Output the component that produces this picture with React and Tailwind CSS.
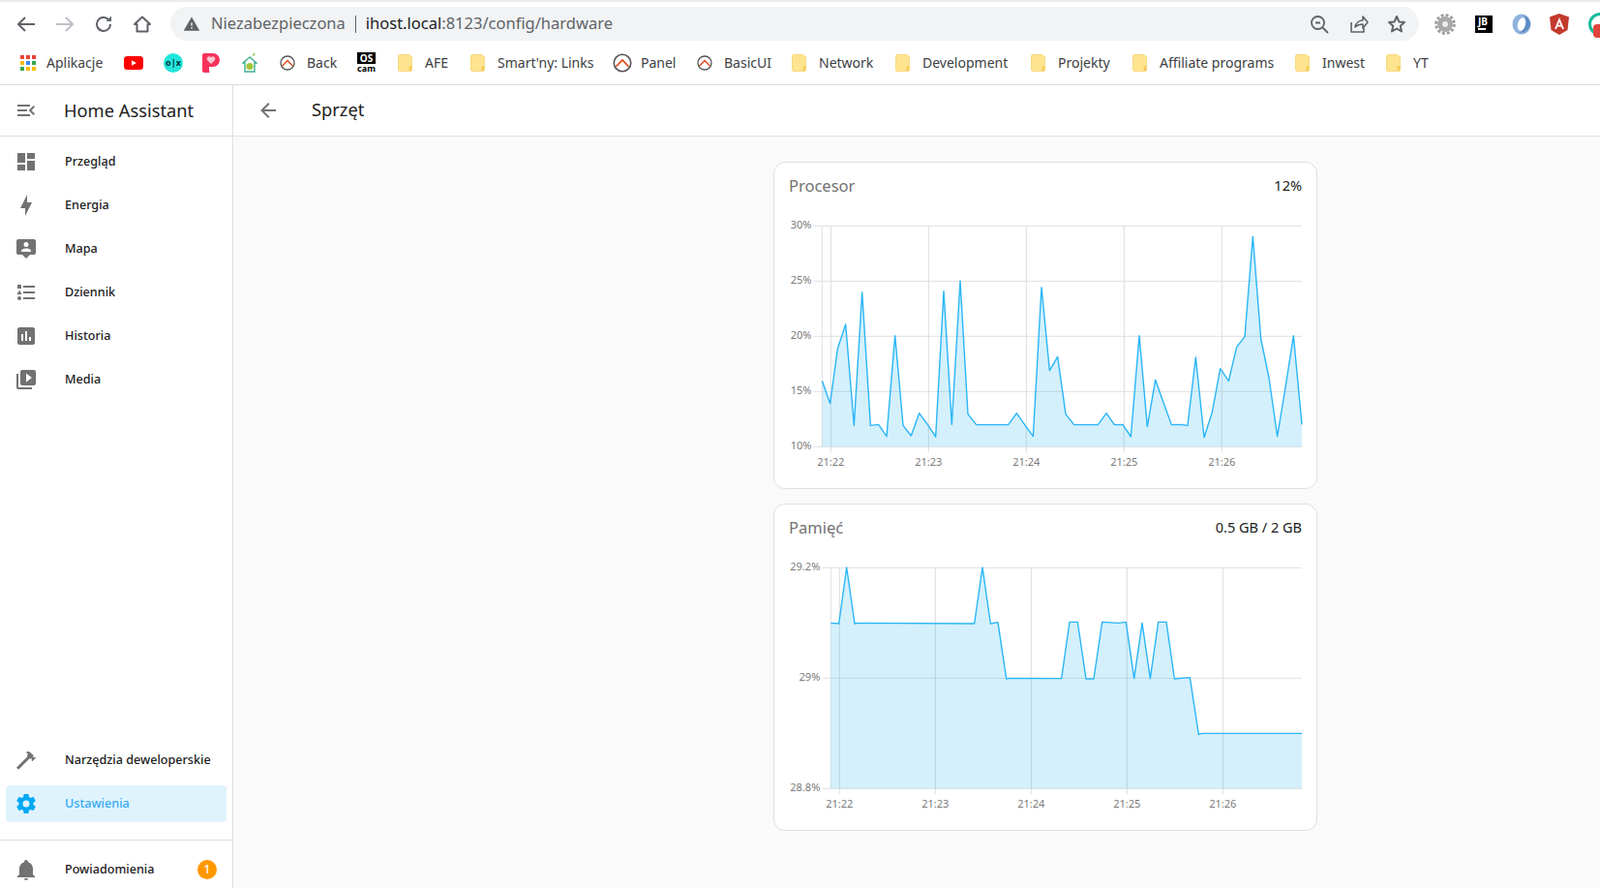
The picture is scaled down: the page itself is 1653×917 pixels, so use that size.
import React from 'react';

// material design icon paths
const icons = {
  menu: 'M21,15.61L19.59,17L14.58,12L19.59,7L21,8.39L17.44,12L21,15.61M3,6H16V8H3V6M3,13V11H13V13H3M3,18V16H16V18H3Z',
  back: 'M20,11V13H8L13.5,18.5L12.08,19.92L4.16,12L12.08,4.08L13.5,5.5L8,11H20Z',
  dashboard: 'M13,3V9H21V3M13,21H21V11H13M3,21H11V15H3M3,13H11V3H3V13Z',
  bolt: 'M11 15H6L13 1V9H18L11 23V15Z',
  map: 'M20 2H4A2 2 0 0 0 2 4V16A2 2 0 0 0 4 18H8L12 22L16 18H20A2 2 0 0 0 22 16V4A2 2 0 0 0 20 2M12 5A2.5 2.5 0 0 1 14.5 7.5A2.5 2.5 0 0 1 12 10A2.5 2.5 0 0 1 9.5 7.5A2.5 2.5 0 0 1 12 5M17 15H7V14C7 12.3 10.3 11.4 12 11.4C13.7 11.4 17 12.3 17 14V15Z',
  list: 'M5,9.5L7.5,14H2.5L5,9.5M3,4H7V8H3V4M5,20A2,2 0 0,0 7,18A2,2 0 0,0 5,16A2,2 0 0,0 3,18A2,2 0 0,0 5,20M9,5V7H21V5H9M9,19H21V17H9V19M9,13H21V11H9V13Z',
  chart: 'M9 17H7V10H9V17M13 17H11V7H13V17M17 17H15V13H17V17M19 3H5C3.9 3 3 3.9 3 5V19C3 20.1 3.9 21 5 21H19C20.1 21 21 20.1 21 19V5C21 3.9 20.1 3 19 3Z',
  media: 'M4,6H2V20A2,2 0 0,0 4,22H18V20H4V6M20,2H8A2,2 0 0,0 6,4V16A2,2 0 0,0 8,18H20A2,2 0 0,0 22,16V4A2,2 0 0,0 20,2M12,14.5V5.5L18,10L12,14.5Z',
  hammer: 'M2 19.63L13.43 8.2L12.72 7.5L14.14 6.07L12 3.89C13.2 2.7 15.09 2.7 16.27 3.89L19.87 7.5L18.45 8.91H21.29L22 9.62L18.45 13.21L17.74 12.5V9.62L16.27 11.04L15.56 10.33L4.13 21.76L2 19.63Z',
  cog: 'M12,15.5A3.5,3.5 0 0,1 8.5,12A3.5,3.5 0 0,1 12,8.5A3.5,3.5 0 0,1 15.5,12A3.5,3.5 0 0,1 12,15.5M19.43,12.97C19.47,12.65 19.5,12.33 19.5,12C19.5,11.67 19.47,11.34 19.43,11L21.54,9.37C21.73,9.22 21.78,8.95 21.66,8.73L19.66,5.27C19.54,5.05 19.27,4.96 19.05,5.05L16.56,6.05C16.04,5.66 15.5,5.32 14.87,5.07L14.5,2.42C14.46,2.18 14.25,2 14,2H10C9.75,2 9.54,2.18 9.5,2.42L9.13,5.07C8.5,5.32 7.96,5.66 7.44,6.05L4.95,5.05C4.73,4.96 4.46,5.05 4.34,5.27L2.34,8.73C2.21,8.95 2.27,9.22 2.46,9.37L4.57,11C4.53,11.34 4.5,11.67 4.5,12C4.5,12.33 4.53,12.65 4.57,12.97L2.46,14.63C2.27,14.78 2.21,15.05 2.34,15.27L4.34,18.73C4.46,18.95 4.73,19.03 4.95,18.95L7.44,17.94C7.96,18.34 8.5,18.68 9.13,18.93L9.5,21.58C9.54,21.82 9.75,22 10,22H14C14.25,22 14.46,21.82 14.5,21.58L14.87,18.93C15.5,18.67 16.04,18.34 16.56,17.94L19.05,18.95C19.27,19.03 19.54,18.95 19.66,18.73L21.66,15.27C21.78,15.05 21.73,14.78 21.54,14.63L19.43,12.97Z',
  bell: 'M21,19V20H3V19L5,17V11C5,7.9 7.03,5.17 10,4.29C10,4.19 10,4.1 10,4A2,2 0 0,1 12,2A2,2 0 0,1 14,4C14,4.1 14,4.19 14,4.29C16.97,5.17 19,7.9 19,11V17L21,19M14,21A2,2 0 0,1 12,23A2,2 0 0,1 10,21',
};

const Icon = ({ path, className = 'text-[#727272]' }) => (
  <svg viewBox="0 0 24 24" className={`w-6 h-6 shrink-0 ${className}`} fill="currentColor" fillRule="evenodd">
    <path d={path} />
  </svg>
);

const Folder = () => (
  <svg width="15" height="18" viewBox="0 0 15 18" className="shrink-0">
    <path d="M1.5 .5H12L14.5 3V16A1.5 1.5 0 0 1 13 17.5H2A1.5 1.5 0 0 1 .5 16V2A1.5 1.5 0 0 1 1.5 .5Z" fill="#ffe48f" stroke="#f6da82" />
    <rect x="11.5" y="12" width="3" height="5" rx="1" fill="#f4cd5f" />
  </svg>
);

const OpenhabIcon = ({ size = 16 }) => (
  <svg width={size} height={size} viewBox="0 0 16 16" className="shrink-0">
    <circle cx="8" cy="8" r="7" fill="none" stroke="#555" strokeWidth="1.3" />
    <path d="M2.8 11L8 5.6L13.2 11" fill="none" stroke="#e64a19" strokeWidth="1.4" />
  </svg>
);

const AppsIcon = () => {
  const colors = ['#ea4335', '#ea4335', '#ea4335', '#fbbc05', '#4285f4', '#34a853', '#34a853', '#fbbc05', '#fbbc05'];
  return (
    <div className="grid grid-cols-3 gap-[2px] w-4 shrink-0">
      {colors.map((c, i) => (
        <span key={i} className="w-1 h-1" style={{ backgroundColor: c }} />
      ))}
    </div>
  );
};

const Youtube = () => (
  <svg width="20" height="14" viewBox="0 0 20 14" className="shrink-0">
    <rect width="20" height="14" rx="3.5" fill="#f00" />
    <path d="M8 4.2L13 7L8 9.8Z" fill="#fff" />
  </svg>
);

const Olx = () => (
  <div className="w-5 h-5 rounded-full bg-[#23e5db] flex items-center justify-center shrink-0 text-[9px] leading-none font-bold text-[#002f34]">o|x</div>
);

const Pocket = () => (
  <svg width="18" height="20" viewBox="0 0 18 20" className="shrink-0">
    <path d="M2 0H11A7 7 0 0 1 11 14H7V17.5A2.5 2.5 0 0 1 2 20A2 2 0 0 1 0 17.5V2A2 2 0 0 1 2 0Z" fill="#f8325c" />
    <path d="M9 11L5 7A2.3 2.3 0 0 1 9 4.5A2.3 2.3 0 0 1 13 7Z" fill="#ffc9d2" />
  </svg>
);

const HouseIcon = () => (
  <svg width="16" height="21" viewBox="0 0 16 21" className="shrink-0">
    <path d="M8 5L1 11H3V20H13V11H15Z" fill="#fff" stroke="#3fae8f" strokeWidth="1.4" />
    <circle cx="8" cy="14.5" r="3.6" fill="#a4c639" />
    <path d="M11 4Q11 1 13.5 0.5Q13.5 3.5 11 4Z" fill="#8bc34a" />
  </svg>
);

const OsCam = () => (
  <div className="w-[19px] shrink-0 flex flex-col items-center font-bold text-center">
    <span className="w-full bg-black text-white text-[10px] leading-[12px]">OS</span>
    <span className="text-black text-[9px] leading-[10px]">cam</span>
  </div>
);

const bookmarks = [
  { label: 'Aplikacje', icon: <AppsIcon />, gap: 'gap-[11px]', width: 'w-[107px]' },
  { label: '', icon: <Youtube />, width: 'w-[41px]' },
  { label: '', icon: <Olx />, width: 'w-[40px]' },
  { label: '', icon: <Pocket />, width: 'w-[41px]' },
  { label: '', icon: <HouseIcon />, width: 'w-[39px]' },
  { label: 'Back', icon: <OpenhabIcon />, gap: 'gap-[12px]', width: 'w-[80px]' },
  { label: '', icon: <OsCam />, width: 'w-[42px]' },
  { label: 'AFE', icon: <Folder />, gap: 'gap-[13px]', width: 'w-[75px]' },
  { label: "Smart'ny: Links", icon: <Folder />, gap: 'gap-[13px]', width: 'w-[147px]' },
  { label: 'Panel', icon: <OpenhabIcon size={20} />, gap: 'gap-[9px]', width: 'w-[87px]' },
  { label: 'BasicUI', icon: <OpenhabIcon />, gap: 'gap-[12px]', width: 'w-[98px]' },
  { label: 'Network', icon: <Folder />, gap: 'gap-[13px]', width: 'w-[107px]' },
  { label: 'Development', icon: <Folder />, gap: 'gap-[13px]', width: 'w-[140px]' },
  { label: 'Projekty', icon: <Folder />, gap: 'gap-[13px]', width: 'w-[105px]' },
  { label: 'Affiliate programs', icon: <Folder />, gap: 'gap-[13px]', width: 'w-[168px]' },
  { label: 'Inwest', icon: <Folder />, gap: 'gap-[13px]', width: 'w-[94px]' },
  { label: 'YT', icon: <Folder />, gap: 'gap-[13px]', width: 'w-[50px]' },
];

const Toolbar = () => (
  <div className="shrink-0 font-['Open_Sans',sans-serif] bg-white">
    <div className="h-[2px] bg-[#e9ebee]" />
    <div className="h-[42px] flex items-start pt-[5px] pl-[15px] overflow-hidden">
      <div className="flex items-center h-[35px] gap-4 mr-[17px] shrink-0 text-[#5f6368]">
        <svg width="24" height="24" viewBox="0 0 24 24" fill="none" stroke="currentColor" strokeWidth="2"><path d="M21 12H4M11 5l-7 7 7 7" /></svg>
        <svg width="24" height="24" viewBox="0 0 24 24" fill="none" stroke="#bdc1c6" strokeWidth="2"><path d="M3 12h17M13 5l7 7-7 7" /></svg>
        <svg width="24" height="24" viewBox="0 0 24 24" fill="none" stroke="currentColor" strokeWidth="2"><path d="M19 12a7 7 0 1 1-2.2-5.1" /><path d="M20 3.5v5.5h-5.5z" fill="currentColor" stroke="none" /></svg>
        <svg width="24" height="24" viewBox="0 0 24 24" fill="none" stroke="currentColor" strokeWidth="2"><path d="M12 4.5L4 12h2.5v7.5h11V12H20z" strokeLinejoin="round" /></svg>
      </div>
      <div className="w-[1290px] shrink-0 h-[35px] rounded-full bg-[#f1f3f4] flex items-center pl-[13px] pr-[11px] text-[16.5px]">
        <svg width="18" height="18" viewBox="0 0 24 24" className="shrink-0 mr-[11px]" fill="#5f6368"><path d="M1 21h22L12 2 1 21zm12-3h-2v-2h2v2zm0-4h-2v-4h2v4z" /></svg>
        <span className="text-[#5f6368]">Niezabezpieczona</span>
        <span className="w-px h-[18px] bg-[#5f6368] mx-[10px]" />
        <span className="text-[#202124]">ihost.local</span>
        <span className="text-[#5f6368]">:8123/config/hardware</span>
        <div className="ml-auto flex items-center gap-[16px] text-[#5f6368]">
          <svg width="24" height="24" viewBox="0 0 24 24" fill="none" stroke="currentColor" strokeWidth="1.8"><circle cx="10.5" cy="10.5" r="6.5" /><path d="M15.5 15.5L21 21M8 10.5h5" /></svg>
          <svg width="24" height="24" viewBox="0 0 24 24" fill="none" stroke="currentColor" strokeWidth="1.6"><path d="M5 10v10h13v-4M9 15c1-5 5-7 8-7V4l5 6-5 6v-4c-3 0-6 1-8 3z" strokeLinejoin="round" /></svg>
          <svg width="24" height="24" viewBox="0 0 24 24" fill="none" stroke="currentColor" strokeWidth="2"><path d="M12 4l2.4 5.4 5.6.6-4.2 3.8 1.2 5.7-5-3-5 3 1.2-5.7L4 10l5.6-.6z" strokeLinejoin="round" /></svg>
        </div>
      </div>
      <div className="flex items-center h-[35px] ml-[15px] gap-[16px] shrink-0">
        <svg width="24" height="24" viewBox="0 0 24 24" className="shrink-0">
          <circle cx="12" cy="12" r="8" fill="#a8a8a8" />
          <circle cx="12" cy="12" r="9.5" fill="none" stroke="#9a9a9a" strokeWidth="2.6" strokeDasharray="3 2" />
          <circle cx="12" cy="12" r="3" fill="#ececec" />
        </svg>
        <div className="w-[18px] h-[18px] ml-[3px] bg-black text-white text-[10px] font-bold leading-[10px] pl-[3px] pt-[1px] shrink-0">JB<div className="w-[8px] h-[2px] bg-white mt-[2px]" /></div>
        <svg width="24" height="24" viewBox="0 0 24 24" className="shrink-0 ml-[2px]">
          <ellipse cx="12" cy="12" rx="9.5" ry="10.5" fill="#8fb2dc" />
          <path d="M14 3C18 7 17 17 10 21C15 21 21 17 21 12C21 8 18 4 14 3Z" fill="#5d8dc4" />
          <ellipse cx="12" cy="12" rx="4" ry="7" fill="#fff" transform="rotate(15 12 12)" />
        </svg>
        <svg width="20" height="22" viewBox="0 0 20 22" className="shrink-0 ml-[1px]"><path d="M10 0L20 3.5L18.5 17L10 22L1.5 17L0 3.5Z" fill="#c3392c" /><path d="M10 4L5 16H7L8 13.5H12L13 16H15ZM8.8 11.8L10 8.5L11.2 11.8Z" fill="#fff" fillRule="evenodd" /></svg>
        <div className="relative w-6 h-6 rounded-full border-[3px] border-[#1abc9c] bg-white shrink-0 ml-[4px]">
          <span className="absolute left-[2px] top-[9px] w-5 h-[14px] rounded-sm bg-[#e0443e]" />
        </div>
      </div>
    </div>
    <div className="h-[44px] flex items-center pl-[21px] pb-[2px] border-b border-[#dadce0] text-[14px] text-[#3c4043]">
      {bookmarks.map((b, i) => (
        <div key={i} className={`flex items-center shrink-0 whitespace-nowrap ${b.width} ${b.gap || ''}`}>
          {b.icon}
          {b.label && <span>{b.label}</span>}
        </div>
      ))}
    </div>
  </div>
);

const NavItem = ({ path, label, active, children }) => (
  <div className={`flex items-center h-[38px] mx-[6px] mb-[7px] pl-[9px] gap-[28px] rounded-[4px] text-[12.6px] font-medium whitespace-nowrap ${active ? 'bg-[#dff3fd] text-[#36a9f4]' : 'text-[#212121]'}`}>
    <Icon path={path} className={active ? 'text-[#03a9f4]' : 'text-[#727272]'} />
    <span>{label}</span>
    {children}
  </div>
);

const Sidebar = () => (
  <div className="w-[241px] shrink-0 flex flex-col bg-white border-r border-[#e0e0e0]">
    <div className="h-[53px] shrink-0 flex items-center pl-[15px] gap-[27px] border-b border-[#e0e0e0]">
      <Icon path={icons.menu} />
      <span className="text-[18.3px] text-[#212121] mb-[1px]">Home Assistant</span>
    </div>
    <div className="pt-[7px] flex-1 flex flex-col">
      <NavItem path={icons.dashboard} label="Przegląd" />
      <NavItem path={icons.bolt} label="Energia" />
      <NavItem path={icons.map} label="Mapa" />
      <NavItem path={icons.list} label="Dziennik" />
      <NavItem path={icons.chart} label="Historia" />
      <NavItem path={icons.media} label="Media" />
      <div className="flex-1" />
      <NavItem path={icons.hammer} label="Narzędzia deweloperskie" />
      <NavItem path={icons.cog} label="Ustawienia" active />
    </div>
    <div className="border-t border-[#e0e0e0] h-[50px] shrink-0 pt-[11px] mt-[11px]">
      <NavItem path={icons.bell} label="Powiadomienia">
        <span className="ml-auto mr-[10px] w-5 h-5 rounded-full bg-[#ff9800] text-white text-[12px] font-medium flex items-center justify-center">1</span>
      </NavItem>
    </div>
  </div>
);

// points read off the screenshot, in 1/3 px from the chart crop corner
const cpuPoints = [
  [178, 700], [203, 770], [226, 600], [251, 525], [277, 838], [302, 425], [328, 838], [353, 835], [378, 872], [404, 560],
  [429, 838], [454, 870], [479, 800], [505, 835], [530, 873], [555, 422], [580, 835], [606, 390], [630, 803], [656, 836],
  [755, 836], [781, 800], [806, 836], [832, 872], [858, 410], [883, 668], [908, 625], [933, 803], [959, 836], [1033, 836],
  [1059, 800], [1084, 836], [1110, 835], [1135, 873], [1161, 560], [1186, 842], [1211, 697], [1236, 767], [1261, 836], [1287, 835],
  [1311, 838], [1336, 627], [1362, 875], [1387, 797], [1412, 662], [1438, 700], [1463, 595], [1488, 563], [1513, 253], [1538, 570],
  [1563, 690], [1589, 872], [1614, 720], [1639, 560], [1665, 835],
].map(([x, y]) => [790 + x / 3, 160 + y / 3]);

const memPoints = [
  [205, 400], [230, 402], [254, 228], [279, 402], [290, 400], [650, 402], [675, 228], [700, 402], [723, 398], [749, 573],
  [760, 571], [920, 572], [945, 397], [970, 397], [996, 573], [1020, 573], [1046, 397], [1096, 400], [1120, 397], [1145, 572],
  [1170, 400], [1195, 572], [1220, 397], [1245, 397], [1270, 573], [1318, 569], [1345, 745], [1355, 742], [1665, 742],
].map(([x, y]) => [790 + x / 3, 510 + y / 3]);

const Chart = ({ top, points, yTicks, xTicks, gridLeft, axisX, labelY, yBottom, yTop }) => {
  const line = points.map(([x, y]) => `${x},${y}`).join(' ');
  const area = `${axisX},${yBottom} ${line} 1345,${yBottom}`;
  return (
    <svg width="560" height="286" viewBox={`800 ${top} 560 286`} className="block font-['Roboto',sans-serif]">
      {yTicks.map((t) => (
        <g key={t.label}>
          <line x1={gridLeft} x2="1345" y1={t.y} y2={t.y} stroke="#e0e0e0" />
          <text x={gridLeft - 2} y={t.y + 3} textAnchor="end" fontSize="11" fill="#7a7a7a">{t.label}</text>
        </g>
      ))}
      <line x1={axisX} x2={axisX} y1={yTop} y2={yBottom} stroke="#e0e0e0" />
      {xTicks.map((t) => (
        <g key={t.label}>
          <line x1={t.x} x2={t.x} y1={yTop} y2={yBottom + 6} stroke="#dcdcdc" />
          <text x={t.x} y={labelY} textAnchor="middle" fontSize="11" fill="#7a7a7a">{t.label}</text>
        </g>
      ))}
      <polygon points={area} fill="rgba(41,182,246,0.2)" />
      <polyline points={line} fill="none" stroke="#29b6f6" strokeWidth="1.4" strokeLinejoin="round" />
    </svg>
  );
};

const Card = ({ title, value, children }) => (
  <div className="w-[562px] h-[338px] bg-white border border-[#e0e0e0] rounded-xl overflow-hidden">
    <div className="h-[49px] flex items-start justify-between pl-[15px] pr-[15px] pt-[12px]">
      <span className="text-[16.5px] leading-6 text-[#727272]">{title}</span>
      <span className="text-[14.5px] leading-[22px] text-[#212121]">{value}</span>
    </div>
    {children}
  </div>
);

const Main = () => (
  <div className="flex-1 min-w-0 flex flex-col bg-[#fafafa]">
    <div className="h-[53px] shrink-0 bg-white flex items-center pl-[24px] gap-[33px] border-b border-[#e0e0e0]">
      <Icon path={icons.back} />
      <span className="text-[18.3px] text-[#212121] mb-[2px]">Sprzęt</span>
    </div>
    <div className="pl-[558px] pt-[26px] flex flex-col gap-[15px]">
      <Card title="Procesor" value="12%">
        <Chart
          top={217}
          points={cpuPoints}
          gridLeft={840.5}
          axisX={849.3}
          yTop={233.3}
          yBottom={461.3}
          labelY={481}
          yTicks={[
            { label: '30%', y: 233.3 },
            { label: '25%', y: 290.3 },
            { label: '20%', y: 347.3 },
            { label: '15%', y: 404.3 },
            { label: '10%', y: 461.3 },
          ]}
          xTicks={[
            { label: '21:22', x: 858.3 },
            { label: '21:23', x: 959.3 },
            { label: '21:24', x: 1060.3 },
            { label: '21:25', x: 1161.3 },
            { label: '21:26', x: 1262.3 },
          ]}
        />
      </Card>
      <Card title="Pamięć" value="0.5 GB / 2 GB">
        <Chart
          top={570}
          points={memPoints}
          gridLeft={849.3}
          axisX={858.3}
          yTop={586.3}
          yBottom={814.3}
          labelY={834}
          yTicks={[
            { label: '29.2%', y: 586.3 },
            { label: '29%', y: 700.3 },
            { label: '28.8%', y: 814.3 },
          ]}
          xTicks={[
            { label: '21:22', x: 867.3 },
            { label: '21:23', x: 966.3 },
            { label: '21:24', x: 1065.3 },
            { label: '21:25', x: 1164.3 },
            { label: '21:26', x: 1263.3 },
          ]}
        />
      </Card>
    </div>
  </div>
);

export default function App() {
  return (
    <div className="h-screen w-full overflow-hidden flex flex-col bg-white font-['Roboto',sans-serif]">
      <Toolbar />
      <div className="flex-1 min-h-0 flex">
        <Sidebar />
        <Main />
      </div>
    </div>
  );
}
